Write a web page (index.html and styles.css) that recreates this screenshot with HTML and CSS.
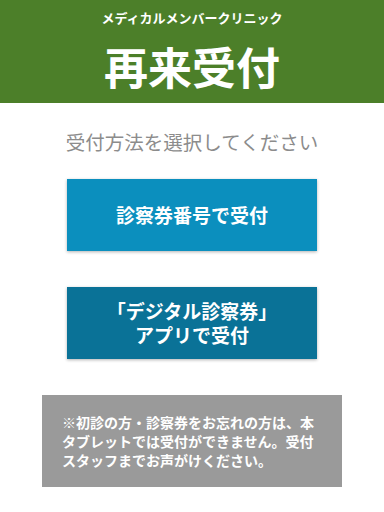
FILE: index.html
```html
<!DOCTYPE html>
<html lang="ja">
<head>
<meta charset="utf-8">
<link rel="stylesheet" href="styles.css">
</head>
<body>
<header class="header">
  <div class="clinic">メディカルメンバークリニック</div>
  <h1 class="title">再来受付</h1>
</header>
<main class="main">
  <p class="lead">受付方法を選択してください</p>
  <a class="btn btn-card">診察券番号で受付</a>
  <a class="btn btn-app"><span class="btn-line">「デジタル診察券」</span><span class="btn-line">アプリで受付</span></a>
  <div class="note">※初診の方・診察券をお忘れの方は、本タブレットでは受付ができません。受付スタッフまでお声がけください。</div>
</main>
</body>
</html>
```
FILE: styles.css
```css
html, body {
  margin: 0;
  padding: 0;
  background: #ffffff;
}
body {
  font-family: "Noto Sans CJK JP", "Noto Sans", sans-serif;
  width: 384px;
}
.header {
  background: #4c7f29;
  color: #ffffff;
  height: 103px;
  box-sizing: border-box;
  padding-top: 10px;
  display: flex;
  flex-direction: column;
  align-items: center;
}
.clinic {
  font-size: 13px;
  font-weight: 700;
  line-height: 16px;
}
.title {
  margin: 14px 0 0;
  font-size: 44px;
  font-weight: 700;
  line-height: 52px;
}
.main {
  display: flex;
  flex-direction: column;
  align-items: center;
}
.lead {
  margin: 25px 0 0;
  font-size: 19.5px;
  line-height: 28px;
  color: #8c8c8c;
  font-weight: 400;
}
.btn {
  display: flex;
  flex-direction: column;
  align-items: center;
  justify-content: center;
  text-align: center;
  width: 250px;
  height: 72px;
  color: #ffffff;
  font-weight: 700;
  font-size: 19px;
  line-height: 24px;
  box-shadow: 0 1px 3px rgba(0, 0, 0, 0.3);
}
.btn-line {
  display: block;
}
.btn-card {
  margin-top: 23px;
  background: #0b8fbe;
}
.btn-app {
  margin-top: 36px;
  background: #0a7297;
}
.note {
  margin-top: 36px;
  width: 300px;
  box-sizing: border-box;
  padding: 18px 20px 17px;
  background: #9a9a9a;
  color: #ffffff;
  font-size: 14px;
  font-weight: 700;
  line-height: 19px;
}
```
